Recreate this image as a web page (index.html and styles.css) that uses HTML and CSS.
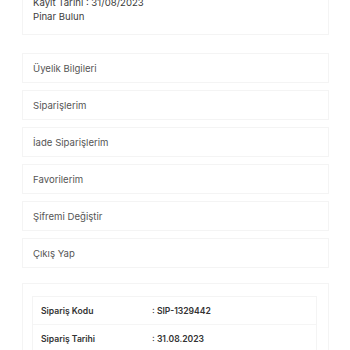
FILE: index.html
```html
<!DOCTYPE html>
<html lang="tr">
<head>
<meta charset="utf-8">
<link rel="stylesheet" href="styles.css">
</head>
<body>
<div class="page">
  <div class="card profile">
    <div class="line">Kayıt Tarihi : 31/08/2023</div>
    <div class="line">Pinar Bulun</div>
  </div>
  <nav class="menu">
    <div class="card item">Üyelik Bilgileri</div>
    <div class="card item">Siparişlerim</div>
    <div class="card item">İade Siparişlerim</div>
    <div class="card item">Favorilerim</div>
    <div class="card item">Şifremi Değiştir</div>
    <div class="card item">Çıkış Yap</div>
  </nav>
  <div class="card order">
    <div class="table">
      <div class="row"><span class="label">Sipariş Kodu</span><span class="value">: SIP-1329442</span></div>
      <div class="row"><span class="label">Sipariş Tarihi</span><span class="value">: 31.08.2023</span></div>
    </div>
  </div>
</div>
</body>
</html>
```
FILE: styles.css
```css
html, body {
  margin: 0;
  padding: 0;
  background: #ffffff;
  overflow: hidden;
}
body {
  font-family: "Inter", "DejaVu Sans", sans-serif;
  color: #444;
}
.page {
  width: 307px;
  margin: -35px 0 0 22px;
  display: flex;
  flex-direction: column;
}
.card {
  box-sizing: border-box;
  border: 1px solid #f4f4f4;
  background: #fff;
}
.profile {
  padding: 30px 11px 10px 10px;
  font-size: 9.6px;
  line-height: 14px;
  color: #3c3c3c;
}
.menu {
  margin-top: 18px;
  display: flex;
  flex-direction: column;
  gap: 7px;
}
.item {
  height: 30px;
  display: flex;
  align-items: center;
  padding-left: 10px;
  font-size: 9.6px;
  color: #555;
}
.order {
  margin-top: 15px;
  padding: 12px 11px 8px 9px;
}
.table {
  border: 1px solid #f4f4f4;
}
.row {
  height: 27px;
  display: flex;
  align-items: center;
  padding-left: 8px;
  border-bottom: 1px solid #f5f5f5;
  font-size: 8.6px;
  font-weight: 600;
  color: #333;
}
.row:last-child {
  border-bottom: none;
}
.label {
  width: 111px;
}
```
